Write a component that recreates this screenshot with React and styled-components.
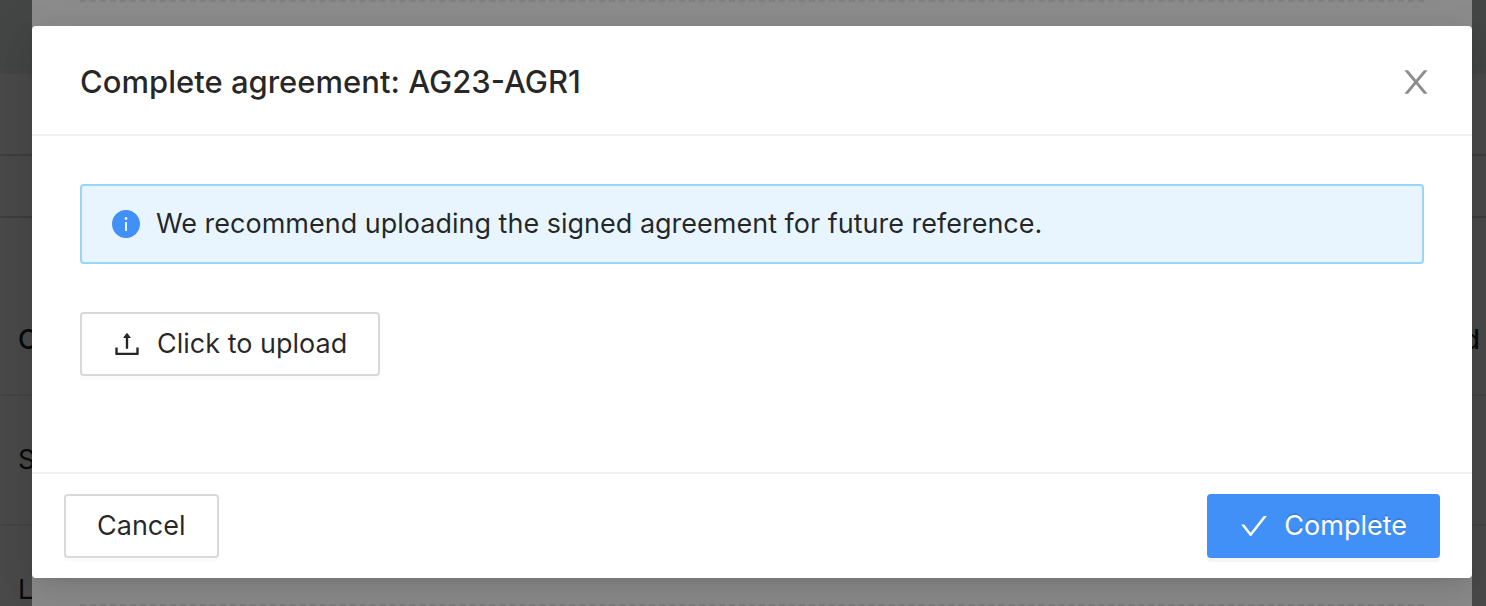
import React from "react";
import styled, { createGlobalStyle, css } from "styled-components";

const GlobalStyle = createGlobalStyle`
  *, *::before, *::after { box-sizing: border-box; }
  body {
    margin: 0;
    background: #4a4a4a;
    font-family: Inter, "Liberation Sans", sans-serif;
    font-size: 27px;
    line-height: 44px;
    color: rgba(0, 0, 0, 0.85);
  }
`;

const Page = styled.div`
  position: relative;
  min-height: 100vh;
  padding: 26px 14px 28px 32px;
  overflow: hidden;
`;

const Backdrop = styled.div`
  position: absolute;
  inset: 0;
  overflow: hidden;
  background: #4a4a4a;
`;

const TopBar = styled.div`
  height: 74px;
  background: #444545;
`;

const Band = styled.div`
  height: ${(p) => p.$height}px;
  border-bottom: 2px solid #3e3e3e;
`;

const Listing = styled.div`
  padding-top: 68px;
`;

const ListingRow = styled.div`
  display: flex;
  align-items: center;
  justify-content: space-between;
  height: ${(p) => (p.$head ? 110 : 130)}px;
  padding: 0 6px 0 18px;
  border-bottom: 2px solid #444444;
  font-weight: ${(p) => (p.$head ? 500 : 400)};
  color: #0b0b0b;
`;

const LowerSheet = styled.div`
  position: absolute;
  inset: 0 14px 0 32px;
  display: flex;
  flex-direction: column;
  padding: 0 48px;
  background: #8c8c8c;
`;

const DropZone = styled.div`
  flex: 1;
  border: 2px dashed #808080;
  border-width: 2px 0;
`;

const Dialog = styled.section`
  position: relative;
  background: #fff;
  border-radius: 4px;
  box-shadow: 0 6px 12px -8px rgba(0, 0, 0, 0.12),
    0 12px 32px 0 rgba(0, 0, 0, 0.08), 0 18px 56px 16px rgba(0, 0, 0, 0.05);
`;

const Header = styled.header`
  display: flex;
  align-items: center;
  justify-content: space-between;
  padding: 34px 40px 30px 48px;
  border-bottom: 2px solid #f0f0f0;
`;

const Title = styled.h1`
  margin: 0;
  font-size: 31px;
  line-height: 44px;
  font-weight: 500;
`;

const CloseButton = styled.button`
  display: flex;
  padding: 0;
  border: 0;
  background: none;
  color: rgba(0, 0, 0, 0.45);
  cursor: pointer;
`;

const Body = styled.div`
  display: flex;
  flex-direction: column;
  align-items: flex-start;
  gap: 48px;
  padding: 48px 48px 96px;
`;

const Notice = styled.div`
  display: flex;
  align-items: center;
  gap: 16px;
  width: 100%;
  padding: 16px 30px;
  background: #e8f5fe;
  border: 2px solid #9ad4fb;
  border-radius: 4px;
`;

const Footer = styled.footer`
  display: flex;
  justify-content: space-between;
  padding: 20px 32px;
  border-top: 2px solid #f0f0f0;
`;

const primary = css`
  color: #fff;
  background: #4190f7;
  border-color: #4190f7;
  text-shadow: 0 -2px 0 rgba(0, 0, 0, 0.12);
  box-shadow: 0 4px 0 rgba(0, 0, 0, 0.04);
`;

const Button = styled.button`
  display: flex;
  align-items: center;
  gap: 16px;
  height: 64px;
  padding: 0 31px;
  border: 2px solid #d9d9d9;
  border-radius: 4px;
  background: #fff;
  color: rgba(0, 0, 0, 0.85);
  font: inherit;
  box-shadow: 0 4px 0 rgba(0, 0, 0, 0.016);
  cursor: pointer;
  ${(p) => p.$primary && primary}
`;

const Glyph = styled.svg`
  flex: none;
  width: ${(p) => p.$size}px;
  height: ${(p) => p.$size}px;
  fill: ${(p) => p.$color || "currentColor"};
`;

const PATHS = {
  close:
    "M563.8 512l262.5-312.9c4.4-5.2.7-13.1-6.1-13.1h-79.8c-4.7 0-9.2 2.1-12.3 5.7L511.6 449.8 295.1 191.7c-3-3.6-7.5-5.7-12.3-5.7H203c-6.8 0-10.5 7.9-6.1 13.1L459.4 512 196.9 824.9A7.95 7.95 0 00203 838h79.8c4.7 0 9.2-2.1 12.3-5.7l216.5-258.1 216.5 258.1c3 3.6 7.5 5.7 12.3 5.7h79.8c6.8 0 10.5-7.9 6.1-13.1L563.8 512z",
  check:
    "M912 190h-69.9c-9.8 0-19.1 4.5-25.1 12.2L404.7 724.5 207 474a32 32 0 00-25.1-12.2H112c-6.7 0-10.4 7.7-6.3 12.9l273.9 347c12.8 16.2 37.4 16.2 50.3 0l488.4-618.9c4.1-5.1.4-12.8-6.3-12.8z",
  upload:
    "M400 317.7h73.9V656c0 4.4 3.6 8 8 8h60c4.4 0 8-3.6 8-8V317.7H624c6.7 0 10.4-7.7 6.3-12.9L518.3 163a8 8 0 00-12.6 0l-112 141.7c-4.1 5.3-.4 13 6.3 13zM878 626h-60c-4.4 0-8 3.6-8 8v154H214V634c0-4.4-3.6-8-8-8h-60c-4.4 0-8 3.6-8 8v198c0 17.7 14.3 32 32 32h684c17.7 0 32-14.3 32-32V634c0-4.4-3.6-8-8-8z",
  info:
    "M512 64C264.6 64 64 264.6 64 512s200.6 448 448 448 448-200.6 448-448S759.4 64 512 64zm32 664c0 4.4-3.6 8-8 8h-48c-4.4 0-8-3.6-8-8V456c0-4.4 3.6-8 8-8h48c4.4 0 8 3.6 8 8v272zm-32-344a48.01 48.01 0 010-96 48.01 48.01 0 010 96z",
};

function Icon({ name, size = 28, color }) {
  return (
    <Glyph $size={size} $color={color} viewBox="64 64 896 896" aria-hidden="true">
      <path d={PATHS[name]} />
    </Glyph>
  );
}

export default function App() {
  return (
    <>
      <GlobalStyle />
      <Page>
        <Backdrop aria-hidden="true">
          <TopBar />
          <Band $height={82} />
          <Band $height={62} />
          <Listing>
            <ListingRow $head>
              <span>C</span>
              <span>d</span>
            </ListingRow>
            <ListingRow>S</ListingRow>
            <ListingRow>L</ListingRow>
          </Listing>
        </Backdrop>
        <LowerSheet aria-hidden="true">
          <DropZone />
        </LowerSheet>
        <Dialog role="dialog" aria-labelledby="dialog-title">
          <Header>
            <Title id="dialog-title">Complete agreement: AG23-AGR1</Title>
            <CloseButton type="button" aria-label="Close">
              <Icon name="close" size={32} />
            </CloseButton>
          </Header>
          <Body>
            <Notice role="note">
              <Icon name="info" color="#4190f7" />
              <span>We recommend uploading the signed agreement for future reference.</span>
            </Notice>
            <Button type="button">
              <Icon name="upload" />
              Click to upload
            </Button>
          </Body>
          <Footer>
            <Button type="button">Cancel</Button>
            <Button type="button" $primary>
              <Icon name="check" />
              Complete
            </Button>
          </Footer>
        </Dialog>
      </Page>
    </>
  );
}
